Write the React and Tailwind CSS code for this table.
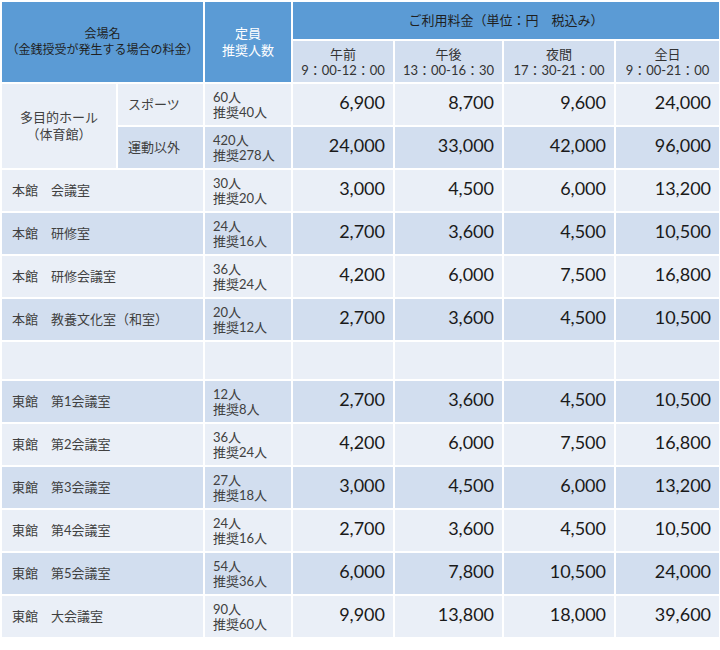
const rows = [
  { sub: "スポーツ", cap: "60人", rec: "推奨40人", fees: ["6,900", "8,700", "9,600", "24,000"], dark: false },
  { sub: "運動以外", cap: "420人", rec: "推奨278人", fees: ["24,000", "33,000", "42,000", "96,000"], dark: true },
  { name: "本館　会議室", cap: "30人", rec: "推奨20人", fees: ["3,000", "4,500", "6,000", "13,200"], dark: false },
  { name: "本館　研修室", cap: "24人", rec: "推奨16人", fees: ["2,700", "3,600", "4,500", "10,500"], dark: true },
  { name: "本館　研修会議室", cap: "36人", rec: "推奨24人", fees: ["4,200", "6,000", "7,500", "16,800"], dark: false },
  { name: "本館　教養文化室（和室）", cap: "20人", rec: "推奨12人", fees: ["2,700", "3,600", "4,500", "10,500"], dark: true },
  { blank: true, dark: false },
  { name: "東館　第1会議室", cap: "12人", rec: "推奨8人", fees: ["2,700", "3,600", "4,500", "10,500"], dark: true },
  { name: "東館　第2会議室", cap: "36人", rec: "推奨24人", fees: ["4,200", "6,000", "7,500", "16,800"], dark: false },
  { name: "東館　第3会議室", cap: "27人", rec: "推奨18人", fees: ["3,000", "4,500", "6,000", "13,200"], dark: true },
  { name: "東館　第4会議室", cap: "24人", rec: "推奨16人", fees: ["2,700", "3,600", "4,500", "10,500"], dark: false },
  { name: "東館　第5会議室", cap: "54人", rec: "推奨36人", fees: ["6,000", "7,800", "10,500", "24,000"], dark: true },
  { name: "東館　大会議室", cap: "90人", rec: "推奨60人", fees: ["9,900", "13,800", "18,000", "39,600"], dark: false },
];

const slots = [
  { label: "午前", time: "9：00-12：00" },
  { label: "午後", time: "13：00-16：30" },
  { label: "夜間", time: "17：30-21：00" },
  { label: "全日", time: "9：00-21：00" },
];

const cell = "border-2 border-white";

export default function App() {
  return (
    <div className="w-[720px] h-[650px] bg-white font-['Lato','Noto_Sans_CJK_JP',sans-serif]">
      <table className="table-fixed border-collapse w-[719px]">
        <colgroup>
          <col className="w-[116px]" />
          <col className="w-[87px]" />
          <col className="w-[88px]" />
          <col className="w-[102px]" />
          <col className="w-[109px]" />
          <col className="w-[112px]" />
          <col className="w-[105px]" />
        </colgroup>
        <thead>
          <tr className="h-[39px]">
            <th colSpan={2} rowSpan={2} className={`${cell} bg-[#5b9bd5] text-[12px] leading-[16px] font-normal text-[#1f1f1f] text-center`}>
              会場名
              <br />
              （金銭授受が発生する場合の料金）
            </th>
            <th rowSpan={2} className={`${cell} bg-[#5b9bd5] text-[13px] leading-[17px] font-normal text-white text-center`}>
              定員
              <br />
              推奨人数
            </th>
            <th colSpan={4} className={`${cell} bg-[#5b9bd5] text-[13px] font-normal text-[#1f1f1f] text-center`}>
              ご利用料金（単位：円　税込み）
            </th>
          </tr>
          <tr className="h-[43px]">
            {slots.map((s) => (
              <th key={s.label} className={`${cell} bg-[#d2deef] font-normal text-[#333] text-center`}>
                <div className="text-[13px] leading-[16px]">{s.label}</div>
                <div className="text-[13px] leading-[16px]">{s.time}</div>
              </th>
            ))}
          </tr>
        </thead>
        <tbody>
          {rows.map((r, i) => {
            const bg = r.dark ? "bg-[#d2deef]" : "bg-[#eaeff7]";
            if (r.blank) {
              return (
                <tr key={i} className="h-[39px]">
                  <td colSpan={2} className={`${cell} ${bg}`}></td>
                  <td className={`${cell} ${bg}`}></td>
                  {slots.map((s) => (
                    <td key={s.label} className={`${cell} ${bg}`}></td>
                  ))}
                </tr>
              );
            }
            return (
              <tr key={i} className="h-[43px]">
                {i === 0 && (
                  <td rowSpan={2} className={`${cell} bg-[#eaeff7] text-[13px] leading-[17px] text-[#404040] text-center`}>
                    多目的ホール
                    <br />
                    （体育館）
                  </td>
                )}
                {r.sub ? (
                  <td className={`${cell} ${bg} text-[13px] text-[#404040] pl-2.5`}>{r.sub}</td>
                ) : (
                  <td colSpan={2} className={`${cell} ${bg} text-[13px] text-[#404040] pl-2.5`}>{r.name}</td>
                )}
                <td className={`${cell} ${bg} text-[13px] leading-[15px] text-[#404040] pl-2`}>
                  <div>{r.cap}</div>
                  <div>{r.rec}</div>
                </td>
                {r.fees.map((f, j) => (
                  <td key={j} className={`${cell} ${bg} text-[18px] text-[#1a1a1a] text-right pr-2 pb-1`}>
                    {f}
                  </td>
                ))}
              </tr>
            );
          })}
        </tbody>
      </table>
    </div>
  );
}
